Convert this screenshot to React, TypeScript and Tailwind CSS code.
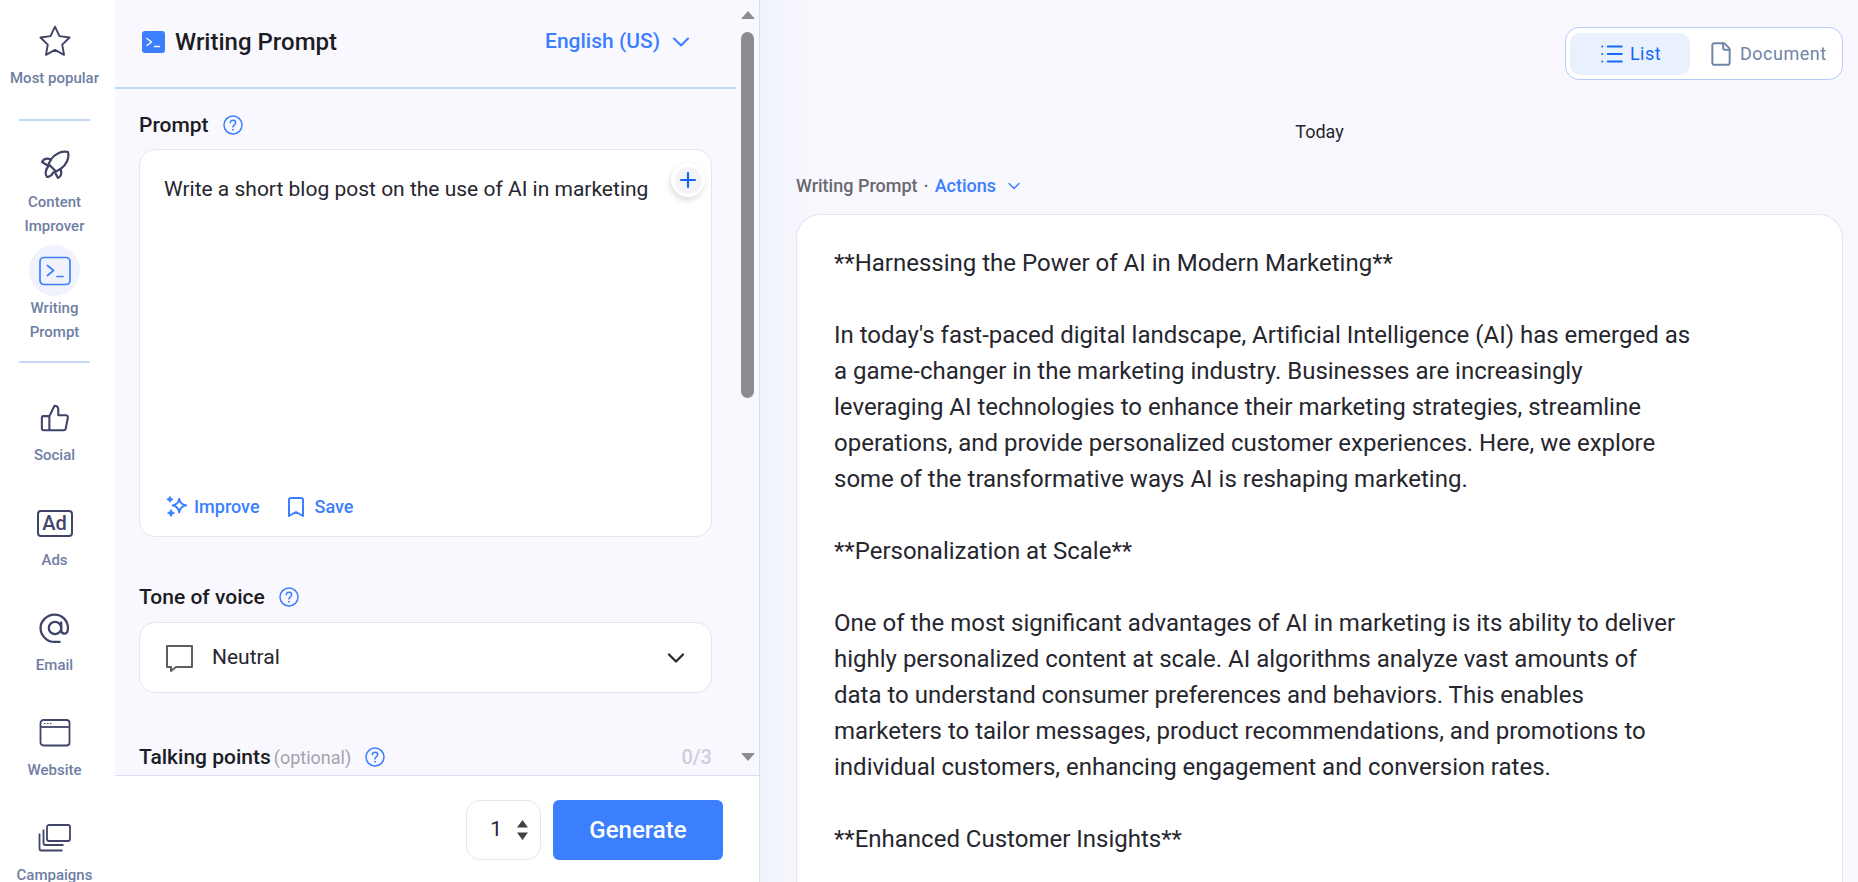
import { Bookmark, ChevronDown, File, List, Plus } from "lucide-react";

const navStroke = "#3f4468";

function StarIcon() {
  return (
    <svg width="34" height="34" viewBox="0 0 32 32" fill="none" stroke={navStroke} strokeWidth="1.800" strokeLinejoin="round">
      <path d="M16 2.500l4.200 8.900 9.500 1.300-6.900 6.700 1.700 9.600-8.500-4.600-8.500 4.600 1.700-9.600-6.900-6.700 9.500-1.300z" />
    </svg>
  );
}

function RocketIcon() {
  return (
    <svg width="30" height="30" viewBox="0 0 30 30" fill="none" stroke={navStroke} strokeWidth="2.200" strokeLinecap="round" strokeLinejoin="round">
      <path d="M28 2C22 .5 15 3.500 11 9.500L8.500 14l7.500 7.500 4.500-2.500C26.500 15 29.500 8 28 2z" />
      <path d="M11 9.500C7 8 3.500 9 2 12l6.500 4" />
      <path d="M20.500 19c1.500 4 .5 7.500-2.500 9l-3.500-6.500" />
      <path d="M8.500 16c-3.500 4-3.500 9-1.500 11 2.500 0 5.500-2 6-4.500" />
    </svg>
  );
}

function TerminalIcon() {
  return (
    <svg width="32" height="30" viewBox="0 0 32 30" fill="none" stroke="#3b7fff" strokeWidth="1.700" strokeLinecap="round" strokeLinejoin="round">
      <rect x="1" y="1.500" width="30" height="27" rx="4" />
      <path d="M8.500 9.500l6 5-6 5" />
      <path d="M18 20.500h6" />
    </svg>
  );
}

function ThumbIcon() {
  return (
    <svg width="30" height="30" viewBox="0 0 32 32" fill="none" stroke={navStroke} strokeWidth="2.200" strokeLinejoin="round" strokeLinecap="round">
      <path d="M10 14l5.500-11c2.500 0 4 1.500 4 4v6h8c1.500 0 2.500 1.300 2.200 2.800l-2.200 11.400c-.2 1-1 1.800-2.200 1.800H3.500c-.8 0-1.500-.7-1.500-1.500V15.500c0-.8.7-1.500 1.500-1.500H10v15" />
    </svg>
  );
}

function AdIcon() {
  return (
    <div className="flex h-[27px] w-[36px] items-center justify-center rounded-[4px] border-2 border-[#3f4468] text-[20px] font-medium leading-none text-[#3f4468]">
      Ad
    </div>
  );
}

function AtIcon() {
  return (
    <svg width="31" height="31" viewBox="0 0 30 30" fill="none" stroke={navStroke} strokeWidth="2.200" strokeLinecap="round">
      <circle cx="15.500" cy="14.500" r="6" />
      <path d="M21.500 9v7.500c0 2 1.200 3.500 3 3.500s3.500-1.800 3.500-5.500C28 7 22 1.500 15 1.500S1.500 7.500 1.500 14.500 7.500 28 15 28h5" />
    </svg>
  );
}

function WindowIcon() {
  return (
    <svg width="32" height="28" viewBox="0 0 32 28" fill="none" stroke={navStroke} strokeWidth="1.800">
      <rect x="1.500" y="1" width="29" height="25.500" rx="3" />
      <path d="M1.500 8h29" />
      <path d="M5 4.500h1.500M8 4.500h1.500M11 4.500h1.500" strokeWidth="1.200" />
    </svg>
  );
}

function CampaignIcon() {
  return (
    <svg width="33" height="28" viewBox="0 0 33 28" fill="none" stroke={navStroke} strokeWidth="1.800" strokeLinejoin="round">
      <rect x="9" y="1" width="23" height="16" rx="2" />
      <path d="M5.500 5.500V19c0 1 .8 2 2 2h18" />
      <path d="M1.500 9.500V24.500c0 1 1 2 2 2h21" />
    </svg>
  );
}

function SparkleIcon() {
  return (
    <svg width="24" height="24" viewBox="0 0 22 22" fill="none" stroke="#3b7fff" strokeWidth="1.800" strokeLinejoin="round">
      <path d="M13 3.500c.6 3.600 2.400 5.400 6.500 6-4.100.6-5.900 2.400-6.500 6.500-.6-4.100-2.400-5.900-6-6.500 3.600-.6 5.400-2.400 6-6z" />
      <path d="M4.500 1.500c.3 1.400 1 2.100 2.500 2.500-1.500.4-2.200 1.100-2.500 2.500C4.200 5.100 3.500 4.400 2 4c1.500-.4 2.200-1.100 2.500-2.500z" fill="#3b7fff" strokeWidth="1" />
      <path d="M5.500 13.500c.4 1.800 1.200 2.600 3 3-1.800.4-2.600 1.200-3 3-.4-1.800-1.200-2.600-3-3 1.800-.4 2.600-1.200 3-3z" fill="#3b7fff" strokeWidth="1" />
    </svg>
  );
}

function NavItem({ label, icon, className }: { label: string; icon: React.ReactNode; className?: string }) {
  return (
    <div className={`flex w-full flex-col items-center ${className ?? ""}`}>
      <div className="flex h-[50px] w-[50px] items-center justify-center">{icon}</div>
      <div className="w-[94px] text-center text-[15px] font-medium leading-[24px] text-[#6f7ea3]">{label}</div>
    </div>
  );
}

function Sidebar() {
  return (
    <aside className="flex h-full w-[115px] shrink-0 flex-col items-center overflow-hidden bg-white pr-[6px] pt-[16px]">
      <NavItem label="Most popular" icon={<StarIcon />} />
      <div className="mt-[29px] h-[2px] w-[71px] shrink-0 bg-[#c5d9f7]" />
      <NavItem className="mt-[19px]" label="Content Improver" icon={<RocketIcon />} />
      <div className="mt-[7px] flex w-full flex-col items-center">
        <div className="flex h-[51px] w-[51px] items-center justify-center rounded-full bg-[#f0f3fd]">
          <TerminalIcon />
        </div>
        <div className="w-[94px] text-center text-[15px] font-medium leading-[24px] text-[#6f7ea3]">Writing Prompt</div>
      </div>
      <div className="mt-[17px] h-[2px] w-[71px] shrink-0 bg-[#c5d9f7]" />
      <div className="mt-[30px] flex w-full flex-col gap-[31px]">
        <NavItem label="Social" icon={<ThumbIcon />} />
        <NavItem label="Ads" icon={<AdIcon />} />
        <NavItem label="Email" icon={<AtIcon />} />
        <NavItem label="Website" icon={<WindowIcon />} />
        <NavItem label="Campaigns" icon={<CampaignIcon />} />
      </div>
    </aside>
  );
}

function Help() {
  return (
    <svg width="20" height="20" viewBox="0 0 20 20" fill="none" stroke="#3b7fff" strokeWidth="1.500" strokeLinecap="round">
      <circle cx="10" cy="10" r="9" />
      <path d="M7.300 7.800c0-1.600 1.200-2.600 2.700-2.600s2.700 1 2.700 2.400c0 2.200-2.700 2.200-2.700 4.300" />
      <path d="M10 14.600v.2" strokeWidth="1.800" />
    </svg>
  );
}

function Scrollbar() {
  return (
    <div className="flex h-full w-[23px] shrink-0 flex-col items-center">
      <div className="mt-[11px] h-0 w-0 border-x-[7.500px] border-b-[8px] border-x-transparent border-b-[#8d8b90]" />
      <div className="mt-[13px] h-[366px] w-[13px] rounded-full bg-[#8d8b90]" />
      <div className="mt-auto mb-[14px] h-0 w-0 border-x-[7.500px] border-t-[8px] border-x-transparent border-t-[#8d8b90]" />
    </div>
  );
}

function PromptPanel() {
  return (
    <section className="flex h-full w-[645px] shrink-0 flex-col border-r border-[#d5def3]">
      <div className="flex min-h-0 flex-1 bg-[#f9f8ff]">
        <div className="min-w-0 flex-1 overflow-hidden">
          <header className="flex h-[89px] items-center border-b-2 border-[#c5d9f7] pb-[3px] pl-[27px] pr-[41px]">
            <div className="flex h-[22px] w-[23px] items-center justify-center rounded-[3px] bg-[#3b7fff]">
              <svg width="17" height="13" viewBox="0 0 17 13" fill="none" stroke="white" strokeWidth="1.400" strokeLinecap="round" strokeLinejoin="round">
                <path d="M2 2.500l4.500 3.500L2 9.500" />
                <path d="M9.500 10.500h5" />
              </svg>
            </div>
            <h1 className="ml-[10px] text-[24px] font-medium leading-none text-[#1c1c24]">Writing Prompt</h1>
            <div className="ml-auto flex items-center gap-[7px] text-[21px] font-medium text-[#3b7fff]">
              English (US)
              <ChevronDown size={28} strokeWidth={1.800} />
            </div>
          </header>
          <div className="pl-[24px] pr-[24px]">
            <div className="mt-[21px] flex items-center gap-[14px]">
              <span className="text-[21px] font-medium leading-[30px] text-[#1c1c24]">Prompt</span>
              <Help />
            </div>
            <div className="relative mt-[9px] flex h-[388px] flex-col rounded-[16px] border border-[#e4e5ee] bg-white">
              <p className="px-[24px] pt-[24px] text-[21px] leading-[30px] text-[#26262e]">Write a short blog post on the use of AI in marketing</p>
              <button className="absolute right-[6px] top-[13px] flex h-[34px] w-[34px] items-center justify-center rounded-full bg-white shadow-[-1px_3px_6px_rgba(0,0,0,0.14)]">
                <span className="flex h-[27px] w-[27px] items-center justify-center rounded-full bg-[#f4f3f8] text-[#1668f5]">
                  <Plus size={24} strokeWidth={2.200} />
                </span>
              </button>
              <div className="mt-auto flex items-center pb-[16px] pl-[25px] text-[#3b7fff]">
                <span className="flex items-center gap-[5px] text-[18px] font-medium">
                  <SparkleIcon />
                  Improve
                </span>
                <span className="ml-[24px] flex items-center gap-[7px] text-[18px] font-medium">
                  <Bookmark size={24} strokeWidth={2} />
                  Save
                </span>
              </div>
            </div>
            <div className="mt-[45px] flex items-center gap-[14px]">
              <span className="text-[21px] font-medium leading-[30px] text-[#1c1c24]">Tone of voice</span>
              <Help />
            </div>
            <div className="mt-[10px] flex h-[71px] items-center rounded-[16px] border border-[#e4e5ee] bg-white pl-[25px] pr-[21px]">
              <svg width="28" height="28" viewBox="0 0 28 28" fill="none" stroke="#5c5c62" strokeWidth="2" strokeLinejoin="round">
                <path d="M2 2h25v21H11l-5 4v-4H2z" />
              </svg>
              <span className="ml-[19px] text-[21px] text-[#26262e]">Neutral</span>
              <ChevronDown className="ml-auto text-[#26262e]" size={28} strokeWidth={1.900} />
            </div>
            <div className="mt-[49px] flex items-center">
              <span className="text-[21px] font-medium leading-[30px] text-[#1c1c24]">Talking points</span>
              <span className="ml-[3px] text-[18px] text-[#a3a3ab]">(optional)</span>
              <span className="ml-[14px]">
                <Help />
              </span>
              <span className="ml-auto text-[20px] font-medium text-[#cfcdd9]">0/3</span>
            </div>
          </div>
        </div>
        <Scrollbar />
      </div>
      <footer className="flex h-[107px] shrink-0 items-start justify-end gap-[12px] border-t border-[#d5def3] bg-white pr-[36px] pt-[24px]">
        <div className="flex h-[60px] w-[75px] items-center justify-end gap-[15px] rounded-[14px] border border-[#e4e5ee] pr-[12px]">
          <span className="text-[21px] text-[#26262e]">1</span>
          <svg width="11" height="20" viewBox="0 0 11 20" fill="#404046">
            <path d="M5.500 0L11 7.500H0zM5.500 20L0 12.500h11z" />
          </svg>
        </div>
        <button className="h-[60px] w-[170px] rounded-[6px] bg-[#3b7fff] text-[24px] font-medium text-white">Generate</button>
      </footer>
    </section>
  );
}

const paragraphs = [
  "**Harnessing the Power of AI in Modern Marketing**",
  "In today's fast-paced digital landscape, Artificial Intelligence (AI) has emerged as\na game-changer in the marketing industry. Businesses are increasingly\nleveraging AI technologies to enhance their marketing strategies, streamline\noperations, and provide personalized customer experiences. Here, we explore\nsome of the transformative ways AI is reshaping marketing.",
  "**Personalization at Scale**",
  "One of the most significant advantages of AI in marketing is its ability to deliver\nhighly personalized content at scale. AI algorithms analyze vast amounts of\ndata to understand consumer preferences and behaviors. This enables\nmarketers to tailor messages, product recommendations, and promotions to\nindividual customers, enhancing engagement and conversion rates.",
  "**Enhanced Customer Insights**",
];

function ResultPanel() {
  return (
    <main className="flex h-full min-w-0 flex-1 flex-col overflow-hidden bg-gradient-to-r from-[#f0f3fc] from-0% to-[#f9f8ff] to-[5%] pl-[36px] pr-[15px]">
      <div className="flex justify-end pt-[27px]">
        <div className="flex h-[53px] w-[278px] items-center rounded-[14px] border border-[#b4ccf6] bg-white pl-[4px]">
          <div className="flex h-[42px] w-[120px] items-center justify-center gap-[5px] rounded-[10px] bg-[#eaf1fe] text-[18px] tracking-[0.5px] text-[#1668f5]">
            <List size={26} strokeWidth={1.800} />
            List
          </div>
          <div className="ml-[18px] flex items-center gap-[6px] text-[18px] tracking-[0.5px] text-[#6f84a8]">
            <File size={26} strokeWidth={1.800} />
            Document
          </div>
        </div>
      </div>
      <div className="mt-[40px] text-center text-[18px] leading-[24px] text-[#26262e]">Today</div>
      <div className="mt-[30px] flex items-center text-[18px] font-medium leading-[24px]">
        <span className="text-[#68686f]">Writing Prompt</span>
        <span className="mx-[6px] text-[#68686f]">·</span>
        <span className="text-[#3b7fff]">Actions</span>
        <ChevronDown className="ml-[8px] text-[#3b7fff]" size={20} strokeWidth={1.700} />
      </div>
      <article className="mt-[16px] min-h-0 flex-1 rounded-t-[24px] border border-b-0 border-[#e4e5ee] bg-white pl-[37px] pt-[30px]">
        <div className="flex flex-col gap-[36px] whitespace-pre-line text-[24px] leading-[36px] text-[#26262e]">
          {paragraphs.map((p) => (
            <p key={p}>{p}</p>
          ))}
        </div>
      </article>
    </main>
  );
}

export default function App() {
  return (
    <div className="flex h-screen w-full overflow-hidden bg-white font-['Roboto',sans-serif]">
      <Sidebar />
      <PromptPanel />
      <ResultPanel />
    </div>
  );
}
